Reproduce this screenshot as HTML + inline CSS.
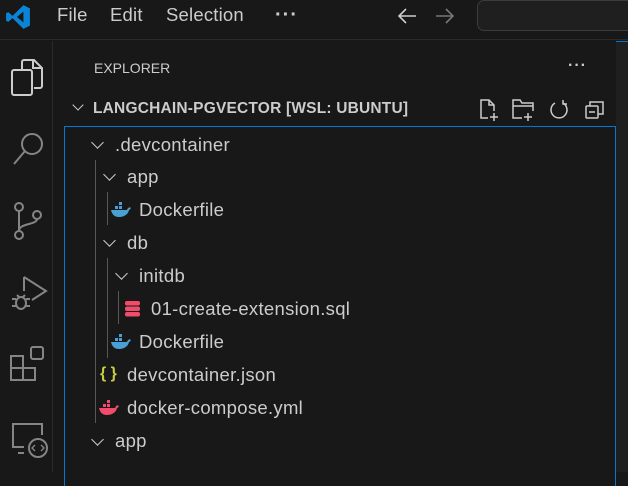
<!DOCTYPE html>
<html><head><style>
*{margin:0;padding:0;box-sizing:border-box}
body{width:628px;height:472px;background:#181818;font-family:"Liberation Sans","DejaVu Sans",sans-serif;color:#ccc;position:relative;overflow:hidden}
.a{position:absolute}
.t{font-size:18.5px;color:#ccc;white-space:nowrap;letter-spacing:0.3px}
.m{font-size:18.5px;color:#ccc;letter-spacing:0.2px}
.chev{position:absolute;width:9px;height:9px;border-right:1.6px solid #ccc;border-bottom:1.6px solid #ccc;transform:rotate(45deg)}
.g{position:absolute;width:1px;background:#585858}
</style></head><body>
<div class="a" style="left:0;top:0;width:628px;height:40px;background:#181818;border-bottom:1px solid #2b2b2b"></div>
<svg class="a" style="left:5px;top:4px" width="26" height="26" viewBox="0 0 24 24"><path d="M17 1 L23 4 V20 L17 23 L7 13 L3 16.5 L1 15.5 V8.5 L3 7.5 L7 11 Z M17 7 L11 12 L17 17 Z" fill="#0a84d6" fill-rule="evenodd"/></svg>
<div class="a m" style="left:57px;top:4px">File</div>
<div class="a m" style="left:110px;top:4px">Edit</div>
<div class="a m" style="left:166px;top:4px">Selection</div>
<div class="a" style="left:275px;top:4px;font-size:20px;font-weight:bold;letter-spacing:1px">···</div>
<svg class="a" style="left:396px;top:7px" width="22" height="18" viewBox="0 0 22 18"><path d="M20 9H3M10 2L3 9l7 7" stroke="#ccc" stroke-width="1.6" fill="none"/></svg>
<svg class="a" style="left:434px;top:7px" width="22" height="18" viewBox="0 0 22 18"><path d="M2 9h17M12 2l7 7-7 7" stroke="#777" stroke-width="1.6" fill="none"/></svg>
<div class="a" style="left:477px;top:0;width:170px;height:31px;border:1px solid #3c3c3c;border-radius:7px;background:#1f1f1f"></div>
<div class="a" style="left:0;top:41px;width:53px;height:431px;border-right:1px solid #2b2b2b"></div>
<svg class="a" style="left:10px;top:58px" width="36" height="40" viewBox="0 0 36 40" fill="none" stroke="#ccc" stroke-width="2"><path d="M12 12 V4 a2 2 0 0 1 2-2 h10 l8 8 v18 a2 2 0 0 1-2 2 h-6"/><path d="M23 2v8h8"/><rect x="2" y="12" width="20" height="25" rx="2"/></svg>
<svg class="a" style="left:11px;top:131px" width="34" height="36" viewBox="0 0 34 36" fill="none" stroke="#858585" stroke-width="2"><circle cx="21" cy="13" r="10"/><path d="M14 20L3 33"/></svg>
<svg class="a" style="left:12px;top:201px" width="32" height="40" viewBox="0 0 32 40" fill="none" stroke="#858585" stroke-width="2"><circle cx="7" cy="6" r="4"/><circle cx="7" cy="34" r="4"/><circle cx="25" cy="14" r="4"/><path d="M7 10v20M25 18c0 6-18 4-18 12"/></svg>
<svg class="a" style="left:10px;top:273px" width="38" height="42" viewBox="0 0 38 42" fill="none" stroke="#858585" stroke-width="2"><path d="M14 4v14M14 4l22 14-14 9"/><ellipse cx="11" cy="30" rx="5" ry="6"/><path d="M2 26h4M2 33h4M16 26h4M16 33h4M7 22l2 2M15 22l-2 2"/></svg>
<svg class="a" style="left:10px;top:346px" width="38" height="40" viewBox="0 0 38 40" fill="none" stroke="#858585" stroke-width="2"><rect x="1" y="10" width="12" height="12"/><rect x="1" y="22" width="12" height="12"/><rect x="13" y="22" width="12" height="12"/><rect x="21" y="1" width="12" height="12" rx="2"/></svg>
<svg class="a" style="left:10px;top:421px" width="38" height="40" viewBox="0 0 38 40" fill="none" stroke="#858585" stroke-width="2"><path d="M14 26H3V3h29v11"/><path d="M8 32h6"/><circle cx="28" cy="27" r="9"/><path d="M25 24l-3 3 3 3M31 24l3 3-3 3" stroke-width="1.4"/></svg>
<div class="a" style="left:94px;top:60px;font-size:14px;color:#ccc">EXPLORER</div>
<div class="a" style="left:568px;top:57px;font-size:16px;font-weight:bold;letter-spacing:1px">···</div>
<div class="chev" style="left:74px;top:101px;width:8px;height:8px"></div>
<div class="a" style="left:93px;top:100px;font-size:15.5px;font-weight:bold;color:#ccc;letter-spacing:0.2px;white-space:nowrap">LANGCHAIN-PGVECTOR [WSL: UBUNTU]</div>
<svg class="a" style="left:477px;top:98px" width="24" height="24" viewBox="0 0 24 24" fill="none" stroke="#ccc" stroke-width="1.5"><path d="M11 20H4V2h8l5 5v6"/><path d="M12 2v5h5M17 15v8M13 19h8"/></svg>
<svg class="a" style="left:511px;top:98px" width="26" height="24" viewBox="0 0 26 24" fill="none" stroke="#ccc" stroke-width="1.5"><path d="M11 20H2V2h7l2 3h11v8M2 8h20"/><path d="M17 15v8M13 19h8"/></svg>
<svg class="a" style="left:548px;top:99px" width="22" height="22" viewBox="0 0 22 22" fill="none" stroke="#ccc" stroke-width="1.5"><path d="M7 4a8 8 0 1 0 8 0"/><path d="M15 1v4h4"/></svg>
<svg class="a" style="left:584px;top:99px" width="22" height="22" viewBox="0 0 22 22" fill="none" stroke="#ccc" stroke-width="1.5"><rect x="2" y="7" width="12" height="12" rx="1"/><path d="M6 7V3h13v12h-5M5 13h6"/></svg>
<div class="a" style="left:64px;top:126px;width:552px;height:360px;border:1px solid #0078d4;border-bottom:none"></div>
<div class="a" style="left:616px;top:41px;width:12px;height:431px;background:#1f1f1f;border-top:1px solid #0078d4"></div>
<div class="g" style="left:95px;top:160px;height:263px"></div>
<div class="g" style="left:107px;top:192px;height:33px"></div>
<div class="g" style="left:107px;top:258px;height:100px"></div>
<div class="g" style="left:118px;top:291px;height:33px"></div>
<div class="chev" style="left:93px;top:138px"></div><div class="a t" style="left:115px;top:134px">.devcontainer</div>
<div class="chev" style="left:105px;top:170px"></div><div class="a t" style="left:127px;top:166px">app</div>
<svg class="a" style="left:110px;top:202px" width="22" height="16" viewBox="0 0 22 16"><path d="M1 8h16c1-3 3-3 4-2-1 1-1 2-2 2-1 5-6 7-10 7-5 0-7-3-8-7z" fill="#4a9fd4"/><rect x="5" y="4" width="3" height="3" fill="#4a9fd4"/><rect x="9" y="4" width="3" height="3" fill="#4a9fd4"/><rect x="9" y="0" width="3" height="3" fill="#4a9fd4"/></svg>
<div class="a t" style="left:139px;top:199px">Dockerfile</div>
<div class="chev" style="left:105px;top:236px"></div><div class="a t" style="left:127px;top:232px">db</div>
<div class="chev" style="left:117px;top:269px"></div><div class="a t" style="left:139px;top:265px">initdb</div>
<svg class="a" style="left:124px;top:300px" width="18" height="18" viewBox="0 0 18 18" fill="#f14c6c"><rect x="1" y="1" width="15" height="4.5" rx="2"/><rect x="1" y="6.5" width="15" height="4.5" rx="2"/><rect x="1" y="12" width="15" height="4.5" rx="2"/></svg>
<div class="a t" style="left:151px;top:298px">01-create-extension.sql</div>
<svg class="a" style="left:110px;top:334px" width="22" height="16" viewBox="0 0 22 16"><path d="M1 8h16c1-3 3-3 4-2-1 1-1 2-2 2-1 5-6 7-10 7-5 0-7-3-8-7z" fill="#4a9fd4"/><rect x="5" y="4" width="3" height="3" fill="#4a9fd4"/><rect x="9" y="4" width="3" height="3" fill="#4a9fd4"/><rect x="9" y="0" width="3" height="3" fill="#4a9fd4"/></svg>
<div class="a t" style="left:139px;top:331px">Dockerfile</div>
<div class="a" style="left:100px;top:365px;font-size:16px;font-weight:bold;color:#cbcb41">{ }</div>
<div class="a t" style="left:127px;top:364px">devcontainer.json</div>
<svg class="a" style="left:98px;top:400px" width="22" height="16" viewBox="0 0 22 16"><path d="M1 8h16c1-3 3-3 4-2-1 1-1 2-2 2-1 5-6 7-10 7-5 0-7-3-8-7z" fill="#f14c6c"/><rect x="5" y="4" width="3" height="3" fill="#f14c6c"/><rect x="9" y="4" width="3" height="3" fill="#f14c6c"/><rect x="9" y="0" width="3" height="3" fill="#f14c6c"/></svg>
<div class="a t" style="left:127px;top:397px">docker-compose.yml</div>
<div class="chev" style="left:93px;top:435px"></div><div class="a t" style="left:115px;top:430px">app</div>
</body></html>
